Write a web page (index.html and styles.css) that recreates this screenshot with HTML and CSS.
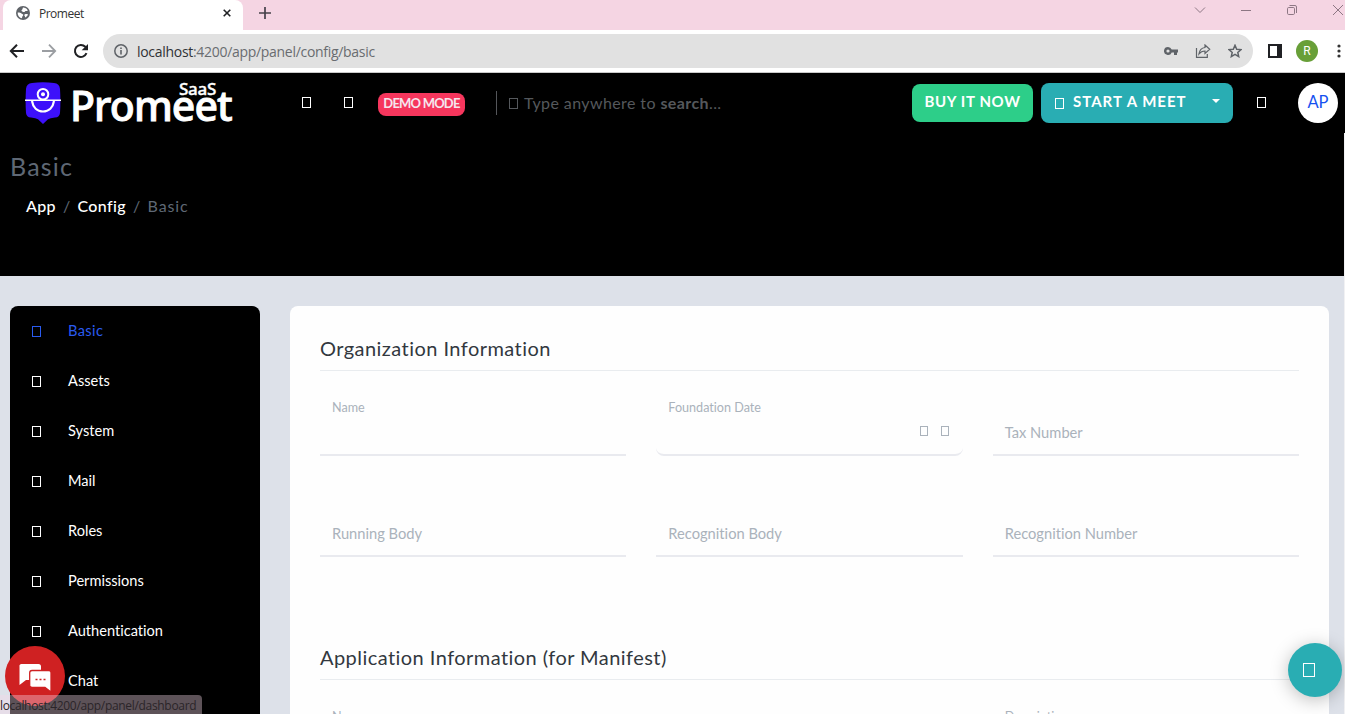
FILE: index.html
```html
<!DOCTYPE html>
<html lang="en">
<head>
<meta charset="utf-8">
<title>Promeet</title>
<link rel="stylesheet" href="styles.css">
</head>
<body>
<div class="tabstrip">
  <div class="tab">
    <svg class="globe" width="14" height="14" viewBox="0 0 14 14"><circle cx="7" cy="7" r="7" fill="#5f6368"/><path d="M1.700 6.500C3 6.500 4.500 6.400 5.500 7.500c.8.800 2 .5 1.700 1.800-.2 1-1.200.9-1.200 2.900C3.500 12 1.500 9.500 1.700 6.500zM7 1.600c2 0 3.800 1 4.800 2.800-1 1.200-2.300.2-2.800 1C8.500 6.300 7.500 6 6.700 5.700 5.500 5.300 5 4.500 6 3.800 6.800 3.300 6.500 2.300 7 1.600zM9 8.200c1.200-.2 2-.1 3 .3-.5 1.400-1.600 2.500-3 3.100.3-1.200-.5-2-.9-2.500z" fill="#fff"/></svg>
    <span class="tab-title">Promeet</span>
    <svg class="tab-close" width="8" height="8" viewBox="0 0 8 8"><path d="M.7.7l6.600 6.600M7.300.7L.7 7.300" stroke="#202124" stroke-width="1.600"/></svg>
  </div>
  <svg class="newtab" width="12" height="12" viewBox="0 0 12 12"><path d="M6 0v12M0 6h12" stroke="#45414a" stroke-width="1.700"/></svg>
  <div class="winbtns">
    <svg width="12" height="12" viewBox="0 0 12 12"><path d="M1 3.500l5 5 5-5" fill="none" stroke="#8d7784"/></svg>
    <svg width="12" height="12" viewBox="0 0 12 12"><path d="M1 6.500h10" stroke="#8d7784"/></svg>
    <svg width="12" height="12" viewBox="0 0 12 12"><rect x="1.500" y="3.500" width="7" height="7" rx="1.200" fill="none" stroke="#8d7784"/><path d="M3.500 1.500H9a1.500 1.500 0 0 1 1.500 1.500v6" fill="none" stroke="#8d7784"/></svg>
    <svg width="12" height="12" viewBox="0 0 12 12"><path d="M1 1l10 10M11 1L1 11" stroke="#8d7784"/></svg>
  </div>
</div>
<div class="toolbar">
  <svg class="nav-ic" width="16" height="16" viewBox="0 0 16 16"><path d="M15 8H2M8 1.700L1.800 8 8 14.300" fill="none" stroke="#202124" stroke-width="2"/></svg>
  <svg class="nav-ic" width="16" height="16" viewBox="0 0 16 16"><path d="M1 8h13M8 1.700L14.200 8 8 14.300" fill="none" stroke="#9b9ea2" stroke-width="1.800"/></svg>
  <svg class="nav-ic" width="16" height="16" viewBox="0 0 16 16"><path d="M13.500 10.200A6 6 0 1 1 12.300 3.800L13.500 5" fill="none" stroke="#202124" stroke-width="2"/><path d="M15 1v6.300H8.700z" fill="#202124"/></svg>
  <div class="omnibox">
    <svg width="14" height="14" viewBox="0 0 14 14"><circle cx="7" cy="7" r="6.200" fill="none" stroke="#5f6368" stroke-width="1.500"/><path d="M7 6v4.500M7 3.400V5" stroke="#5f6368" stroke-width="1.600"/></svg>
    <span class="url"><b>localhost</b>:4200/app/panel/config/basic</span>
    <svg class="key" width="14" height="10" viewBox="0 0 14 10"><path fill-rule="evenodd" d="M4 1a4 4 0 0 1 3.700 2.500H14v3h-1V9h-3V6.500H7.700A4 4 0 1 1 4 1zM4 3.400a1.600 1.600 0 1 0 0 3.200 1.600 1.600 0 0 0 0-3.200z" fill="#5f6368"/></svg>
    <svg class="share" width="16" height="14" viewBox="0 0 16 14"><path d="M1.500 4v9.300h10.800V10" fill="none" stroke="#5f6368" stroke-width="1.200"/><path d="M10 1l4.700 4.200L10 9.400V7C7.400 7 5.600 7.800 4 9.800 4.500 6.500 6.500 4 10 3.500z" fill="none" stroke="#5f6368" stroke-width="1.200"/></svg>
    <svg width="14" height="14" viewBox="0 0 14 14"><path d="M7 1.300l1.700 3.900 4.300.4-3.200 2.800.9 4.200L7 10.400l-3.700 2.200.9-4.200L1 5.600l4.300-.4z" fill="none" stroke="#5f6368" stroke-width="1.500"/></svg>
  </div>
  <svg class="side" width="14" height="14" viewBox="0 0 14 14"><path fill-rule="evenodd" d="M0 0h14v14H0zM2 2v10h7V2z" fill="#202124"/></svg>
  <span class="profile">R</span>
  <svg class="dots" width="4" height="14" viewBox="0 0 4 14"><circle cx="2" cy="2" r="1.600" fill="#333"/><circle cx="2" cy="7" r="1.600" fill="#333"/><circle cx="2" cy="12" r="1.600" fill="#333"/></svg>
</div>

<div class="page">
  <header class="topbar">
    <div class="logo">
      <svg width="36" height="42" viewBox="0 0 36 42"><path d="M7 1Q18-.6 29 1 34.500 1.500 35 7q.8 13 0 24-.4 4.200-5 4.600-5 .4-7 1.700L18 42l-5-4.700q-2-1.300-7-1.700Q1.400 35.200 1 31 .2 20 1 7 1.500 1.500 7 1z" fill="#3d10fa"/><g fill="none" stroke="#fff"><circle cx="18" cy="12.300" r="5.300" stroke-width="2"/><path d="M0 18.300h36" stroke-width="1.600"/><path d="M7 19c1 6.500 5.300 10.500 11 10.500S28 25.500 29 19" stroke-width="2.200"/></g><circle cx="18" cy="12.300" r="2" fill="#fff"/></svg>
      <div class="wordmark"><span class="word">Promeet</span><span class="saas">SaaS</span></div>
    </div>
    <i class="box b1"></i><i class="box b2"></i>
    <span class="badge">DEMO MODE</span>
    <div class="search"><i class="box"></i><span>Type anywhere to <b>search</b>...</span></div>
    <button class="btn buy">BUY IT NOW</button>
    <button class="btn start"><i class="box"></i><span>START A MEET</span><i class="caret"></i></button>
    <i class="box b3"></i>
    <span class="avatar">AP</span>
  </header>
  <section class="hero">
    <h1>Basic</h1>
    <nav class="crumbs"><b>App</b><span>/</span><b>Config</b><span>/</span><em>Basic</em></nav>
  </section>
  <main class="content">
    <aside class="menu">
      <a class="active"><i class="box"></i><span>Basic</span></a>
      <a><i class="box"></i><span>Assets</span></a>
      <a><i class="box"></i><span>System</span></a>
      <a><i class="box"></i><span>Mail</span></a>
      <a><i class="box"></i><span>Roles</span></a>
      <a><i class="box"></i><span>Permissions</span></a>
      <a><i class="box"></i><span>Authentication</span></a>
      <a><i class="box"></i><span>Chat</span></a>
    </aside>
    <div class="card">
      <h2 class="t1">Organization Information</h2>
      <div class="grid">
        <div class="field float"><label>Name</label></div>
        <div class="field float round"><label class="fd">Foundation Date</label><i class="box"></i><i class="box"></i></div>
        <div class="field"><label>Tax Number</label></div>
        <div class="field"><label>Running Body</label></div>
        <div class="field"><label>Recognition Body</label></div>
        <div class="field"><label>Recognition Number</label></div>
      </div>
      <h2 class="t2">Application Information (for Manifest)</h2>
      <div class="grid">
        <div class="field float"><label>Name</label></div>
        <div class="field blank"></div>
        <div class="field float"><label>Description</label></div>
      </div>
    </div>
  </main>
</div>
<div class="edge"></div>
<div class="chat-fab"><svg width="32" height="28" viewBox="0 0 32 28"><path d="M2.500 0h17A2.500 2.500 0 0 1 22 2.500V16H7l-6.500 5V2.500A2 2 0 0 1 2.500 0z" fill="#fff"/><path d="M13 6.500h16.500A2.300 2.300 0 0 1 32 8.800V28l-6-4.500H13A2.300 2.300 0 0 1 10.700 21.200V8.800A2.300 2.300 0 0 1 13 6.500z" fill="#fff" stroke="#cf2122" stroke-width="1.300"/><path d="M16.500 15.500h2M20.500 15.500h2M24.500 15.500h2" stroke="#cf2122" stroke-width="1.500"/></svg></div>
<div class="add-fab"><i class="box"></i></div>
<div class="status">localhost:4200/app/panel/dashboard</div>
</body>
</html>
```
FILE: styles.css
```css
* { box-sizing: border-box; }
body { margin: 0; width: 1345px; height: 714px; overflow: hidden; font-family: Lato, sans-serif; font-variant-ligatures: none; background: #dde1e9; position: relative; }
svg { display: block; flex: none; }

.tabstrip { height: 30px; background: #f5d5e3; display: flex; align-items: flex-start; padding-left: 3px; }
.tab { width: 240px; height: 30px; background: #fff; border-radius: 8px 8px 0 0; display: flex; align-items: center; padding: 0 12px 4px 13px; font: 12px "Open Sans", sans-serif; color: #333; }
.tab-title { margin-left: 9px; flex: 1; letter-spacing: -.5px; }
.newtab { margin: 7px 0 0 16px; }
.winbtns { display: flex; gap: 34px; margin: 4px 1px 0 auto; }

.toolbar { height: 43px; background: #fff; border-bottom: 1px solid #c9c9c9; display: flex; align-items: center; padding-left: 9px; }
.nav-ic { margin-right: 16px; }
.omnibox { width: 1150px; height: 34px; margin-left: -2px; border-radius: 17px; background: #e1e1e1; display: flex; align-items: center; padding: 0 11px; }
.url { margin-left: 9px; flex: 1; font: 14px "Open Sans", sans-serif; letter-spacing: -.3px; color: #696c70; }
.url b { font-weight: 400; color: #303236; }
.key { margin-right: 17px; }
.share { margin-right: 17px; }
.side { margin-left: 15px; }
.profile { width: 22px; height: 22px; margin: 0 0 0 14px; border-radius: 50%; background: #689f38; color: #fff; font: 12px/22px Roboto, sans-serif; text-align: center; }
.dots { margin-left: 19px; }

.box { display: block; flex: none; width: 9px; height: 11px; border: 1px solid currentColor; }
.topbar { height: 60px; background: #000; display: flex; align-items: center; padding-left: 25px; color: #fff; }
.logo { width: 277px; display: flex; }
.wordmark { position: relative; margin-left: 9px; height: 42px; width: 170px; }
.word { font: 500 41px/46px "Noto Sans", sans-serif; letter-spacing: -.9px; -webkit-text-stroke: .9px #fff; }
.saas { position: absolute; left: 109px; top: -3px; font: 500 17px/20px "Noto Sans", sans-serif; letter-spacing: -.3px; -webkit-text-stroke: .4px #fff; }
.topbar > .box { margin-top: -2px; }
.b1 { margin-right: 33px; }
.b2 { margin-right: 25px; }
.badge { width: 87px; height: 23px; margin-top: 3px; border-radius: 8px; background: #f6365d; color: #f5e6ee; font-size: 13px; letter-spacing: -.8px; font-weight: 700; line-height: 21px; text-align: center; white-space: nowrap; }
.search { height: 24px; width: 416px; margin-left: 31px; border-left: 1px solid #54565a; padding-left: 12px; display: flex; align-items: center; gap: 6px; font-size: 16px; letter-spacing: .4px; color: #55585c; }
.search span { margin-top: -1px; }
.btn { border: 0; border-radius: 8px; padding: 0; color: #fff; font: 700 15px Lato, sans-serif; letter-spacing: .65px; }
.buy { width: 121px; height: 38px; padding-bottom: 4px; background: #2dce89; }
.start { width: 192px; height: 40px; margin-left: 8px; background: #29adb3; display: flex; align-items: center; padding: 0 13px 4px 14px; letter-spacing: 1px; }
.start .box { margin-right: 9px; position: relative; top: 2px; }
.caret { margin-left: auto; border: 4px solid transparent; border-top-color: #fff; border-bottom: 0; }
.b3 { margin-left: 24px; }
.avatar { width: 40px; height: 40px; margin-left: 32px; border-radius: 50%; background: #fff; color: #1551f0; font: 16.5px/38px Lato, sans-serif; text-align: center; }

.hero { height: 143px; background: #000; padding: 19px 10px; color: #5f6875; }
.hero h1 { margin: 0; font-size: 25px; line-height: 28px; font-weight: 400; letter-spacing: 1.2px; }
.crumbs { margin: 16px; display: flex; gap: 7px; font-size: 16px; letter-spacing: .35px; line-height: 20px; }
.crumbs b { color: #fff; font-weight: 500; }
.crumbs em { font-style: normal; letter-spacing: .9px; }

.content { display: flex; align-items: flex-start; gap: 30px; padding: 30px 10px 0; }
.menu { width: 250px; height: 408px; overflow: hidden; border-radius: 8px 8px 0 0; background: #000; color: #fff; }
.menu a { display: flex; align-items: center; height: 50px; padding-left: 21px; font-size: 14.6px; line-height: 20px; }
.menu span { margin-top: -1px; }
.menu .box { margin: 1px 27px 0 1px; }
.menu .active { color: #2a5bf0; }
.menu .active span { letter-spacing: .4px; }
.card { width: 1039px; height: 408px; overflow: hidden; border-radius: 8px 8px 0 0; background: #fefefe; padding: 30px; }
.card h2 { height: 35px; margin: 0; padding-bottom: 9px; border-bottom: 1px solid #e9ecef; color: #32383e; font-size: 20px; font-weight: 400; line-height: 25px; letter-spacing: .45px; }
.grid { display: grid; grid-template-columns: repeat(3, 1fr); column-gap: 30px; row-gap: 55px; padding-top: 39px; }
.field { height: 46px; border-bottom: 2px solid #e9eaef; display: flex; align-items: center; padding: 0 12px; color: #aab2bb; font-size: 14.7px; }
.float { font-size: 12.6px; }
.float label { align-self: flex-start; margin-top: -10px; line-height: 16px; }
.round { border-radius: 0 0 8px 8px; }
.round label { flex: 1; }
.round .box { width: 8px; height: 10px; margin: -3px 1px 0 12px; position: relative; left: -1px; }
.blank { border: 0; }
.card .t2 { margin-top: 88px; }

.edge { position: absolute; right: 0; top: 133px; width: 1px; height: 581px; background: #f1f1f3; }
.chat-fab { position: absolute; left: 5px; top: 646px; width: 60px; height: 60px; border-radius: 50%; background: #cf2122; padding: 18px 14px; }
.add-fab { position: absolute; left: 1288px; top: 643px; width: 54px; height: 54px; border-radius: 50%; background: #29adb3; color: #fff; padding: 20px 15px; box-shadow: 0 3px 18px rgba(0, 0, 0, .25); }
.add-fab .box { width: 12px; height: 14px; }
.status { position: absolute; left: 0; top: 695px; width: 202px; height: 19px; border-top-right-radius: 4px; background: rgba(245, 215, 232, .38); color: #2b2529; font: 12px/21px "Open Sans", sans-serif; letter-spacing: -.32px; white-space: nowrap; }
```
